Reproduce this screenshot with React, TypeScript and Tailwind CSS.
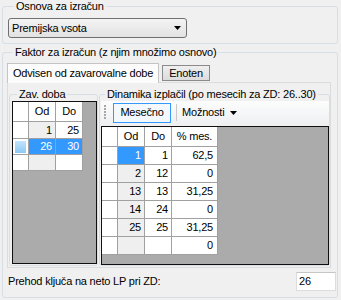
import type { ReactNode } from 'react';

function GroupBox({ title, className, legendClass, children }: {
  title: string; className: string; legendClass: string; children: ReactNode;
}) {
  return (
    <fieldset className={`rounded-[3px] border border-[#d5dfe5] ${className}`}>
      <legend className={`px-[2px] leading-[13px] ${legendClass}`}>{title}</legend>
      {children}
    </fieldset>
  );
}

function DownArrow() {
  return (
    <svg width="7" height="4" viewBox="0 0 7 4"><path d="M0 0h7L3.5 4z" fill="#000" /></svg>
  );
}

const zavRows = [
  { od: '1', do: '25', selected: false, h: 'h-[17px]' },
  { od: '26', do: '30', selected: true, h: 'h-[16px]' },
  { od: '', do: '', selected: false, h: 'h-[16px]' },
];

const dinRows = [
  { od: '1', do: '1', pct: '62,5', selected: true },
  { od: '2', do: '12', pct: '0', selected: false },
  { od: '13', do: '13', pct: '31,25', selected: false },
  { od: '14', do: '24', pct: '0', selected: false },
  { od: '25', do: '25', pct: '31,25', selected: false },
  { od: '', do: '', pct: '0', selected: false },
];

const cell = 'flex items-center border-r border-b border-[#a0a0a0]';

function ZavGrid() {
  return (
    <div className="h-[163px] w-[85px] border border-[#101010] bg-[#ababab]">
      <div className="flex h-[20px]">
        <div className={`${cell} w-[16px] bg-white`} />
        <div className={`${cell} w-[27px] justify-center bg-white`}>Od</div>
        <div className={`${cell} w-[27px] justify-center bg-white`}>Do</div>
      </div>
      {zavRows.map((row, i) => (
        <div key={i} className={`flex ${row.h}`}>
          <div className={`${cell} w-[16px] justify-center bg-white`}>
            {row.selected && <div className="h-[12px] w-[11px] bg-gradient-to-b from-[#c4e4fb] to-[#8cc8f3]" />}
          </div>
          <div className={`${cell} w-[27px] justify-end pr-[3px] ${row.selected ? 'bg-[#3399ff] text-white' : 'bg-[#efefef]'}`}>{row.od}</div>
          <div className={`${cell} w-[27px] justify-end pr-[3px] ${row.selected ? 'bg-[#3399ff] text-white' : 'bg-white'}`}>{row.do}</div>
        </div>
      ))}
    </div>
  );
}

function DinGrid() {
  return (
    <div className="h-[139px] w-[228px] border border-[#101010] bg-[#ababab]">
      <div className="flex h-[20px]">
        <div className={`${cell} w-[16px] bg-white`} />
        <div className={`${cell} w-[27px] justify-center bg-white`}>Od</div>
        <div className={`${cell} w-[27px] justify-center bg-white`}>Do</div>
        <div className={`${cell} w-[46px] justify-center bg-white`}>% mes.</div>
      </div>
      {dinRows.map((row, i) => (
        <div key={i} className="flex h-[18px]">
          <div className={`${cell} w-[16px] bg-white`} />
          <div className={`${cell} w-[27px] justify-end pr-[3px] ${row.selected ? 'bg-[#3399ff] text-white' : 'bg-[#efefef]'}`}>{row.od}</div>
          <div className={`${cell} w-[27px] justify-end pr-[3px] bg-white`}>{row.do}</div>
          <div className={`${cell} w-[46px] justify-end pr-[4px] bg-white`}>{row.pct}</div>
        </div>
      ))}
    </div>
  );
}

export default function App() {
  return (
    <div className="h-[300px] w-[341px] overflow-hidden bg-[#f0f0f0] font-['Liberation_Sans',Arial,sans-serif] text-[11px] leading-[13px] tracking-[-0.2px] text-black">
      <GroupBox title="Osnova za izračun" className="ml-[2px] w-[336px] px-[5px] pt-[5px] pb-[5px]" legendClass="ml-[6px]">
        <div className="flex h-[20px] w-[179px] items-center justify-between rounded-[3px] border border-[#707070] bg-gradient-to-b from-[#f4f4f4] to-[#e2e2e2] pr-[5px] pl-[3px]">
          <span>Premijska vsota</span>
          <DownArrow />
        </div>
      </GroupBox>

      <GroupBox title="Faktor za izračun (z njim množimo osnovo)" className="mt-[2px] ml-[2px] w-[336px] pt-[4px] pr-[1px] pb-[6px] pl-[4px]" legendClass="ml-[6px]">
        <div className="flex items-end">
          <div className="relative z-10 -mb-px flex h-[20px] w-[152px] items-center border border-b-0 border-[#c4c4c4] bg-[#fcfcfc] pl-[5px]">
            Odvisen od zavarovalne dobe
          </div>
          <div className="mb-[1px] ml-[3px] flex h-[16px] w-[48px] items-center justify-center border border-[#8a8a8a] bg-gradient-to-b from-[#efefef] to-[#dcdcdc]">
            Enoten
          </div>
        </div>
        <div className="flex h-[186px] w-[324px] border border-[#dcdcdc] pt-[5px] pl-[1px]">
          <GroupBox title="Zav. doba" className="h-[178px] w-[90px] pl-[2px]" legendClass="ml-[5px]">
            <ZavGrid />
          </GroupBox>
          <GroupBox title="Dinamika izplačil (po mesecih za ZD: 26..30)" className="ml-[1px] h-[178px] w-[232px] pl-[1px]" legendClass="ml-[4px]">
            <div className="flex h-[23px] w-[228px] items-center rounded-b-[3px] bg-gradient-to-b from-[#fdfdfd] to-[#eef0f2] pl-[3px]">
              <svg width="3" height="17" viewBox="0 0 3 17">
                {[1, 4, 7, 10, 13].map((y) => <rect key={y} x="0" y={y} width="2" height="2" fill="#a8a8a8" />)}
              </svg>
              <div className="ml-[6px] flex h-[20px] w-[58px] items-center justify-center border border-[#3399ff] bg-[#f3f8fd]">Mesečno</div>
              <div className="mx-[5px] h-[17px] w-px bg-[#c8c8c8]" />
              <span>Možnosti</span>
              <span className="ml-[6px] flex"><DownArrow /></span>
            </div>
            <div className="mt-[2px]">
              <DinGrid />
            </div>
          </GroupBox>
        </div>
        <div className="mt-[4px] flex items-center justify-between">
          <span className="ml-[1px]">Prehod ključa na neto LP pri ZD:</span>
          <div className="flex h-[19px] w-[40px] items-center border border-[#dcdcdc] border-t-[#c6c6c6] bg-white pl-[2px]">26</div>
        </div>
      </GroupBox>
    </div>
  );
}
